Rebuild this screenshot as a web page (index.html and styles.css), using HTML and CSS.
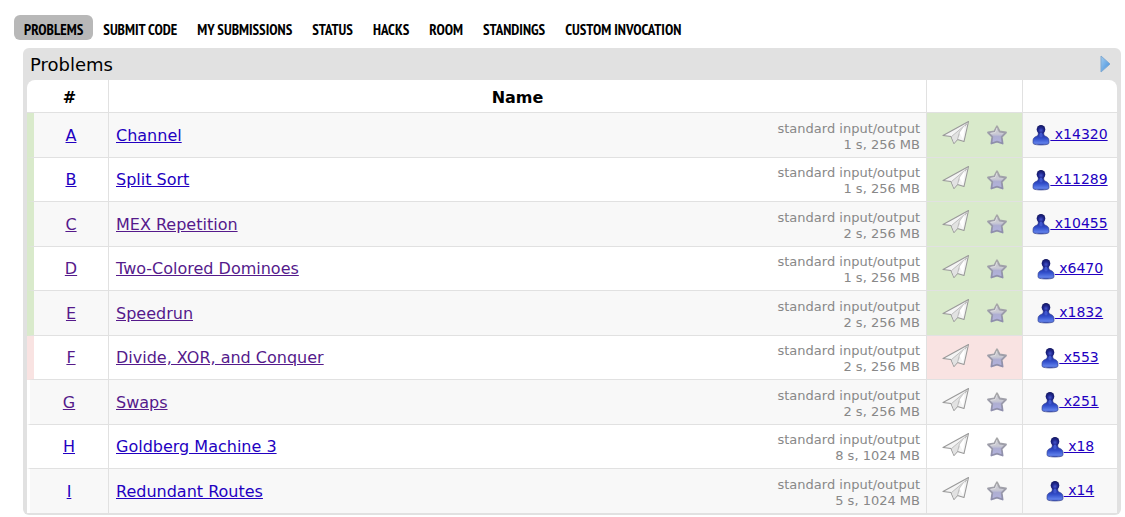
FILE: index.html
```html
<!DOCTYPE html>
<html lang="en">
<head>
<meta charset="utf-8">
<title>Problems</title>
<link rel="stylesheet" href="styles.css">
</head>
<body>
<svg class="defs" width="0" height="0" aria-hidden="true">
  <defs>
    <linearGradient id="star-fill" x1="0" y1="0" x2="0" y2="1"><stop offset="0" stop-color="#c8c8cc"/><stop offset=".45" stop-color="#cacad4"/><stop offset=".6" stop-color="#aeaed2"/><stop offset="1" stop-color="#b4b4e0"/></linearGradient>
    <linearGradient id="star-edge" x1="0" y1="0" x2="0" y2="1"><stop offset="0" stop-color="#a8a8a8"/><stop offset="1" stop-color="#8e8eac"/></linearGradient>
    <radialGradient id="head-fill" cx=".5" cy=".6" r=".6"><stop offset="0" stop-color="#4454cc"/><stop offset=".5" stop-color="#20288e"/><stop offset="1" stop-color="#12155e"/></radialGradient>
    <linearGradient id="body-fill" x1="0" y1="0" x2="0" y2="1"><stop offset="0" stop-color="#1c2590"/><stop offset=".5" stop-color="#3350cc"/><stop offset=".85" stop-color="#6080ea"/><stop offset="1" stop-color="#3c50b0"/></linearGradient>
    <linearGradient id="arrow-fill" x1="0" y1="0" x2="1" y2="1"><stop offset="0" stop-color="#a4cdf0"/><stop offset="1" stop-color="#3d8ddd"/></linearGradient>
    <symbol id="plane" viewBox="0 0 28 26">
      <path d="M26.500 1.500 1 15.500 9 16.500 12 23.500 15.500 19.500 22 21.500z" fill="#f4f4f4" stroke="#999" stroke-width="1.100" stroke-linejoin="round"/>
      <path d="M25.500 3 9.500 16.500 12 23 15.500 19z" fill="#e2e2e2"/>
      <path d="M25.500 3 9.500 16.500M25 4 17.500 12 15.500 19.500" fill="none" stroke="#b4b4b4" stroke-width=".8"/>
      <path d="M23 5 17.500 13 21 19z" fill="#fff"/>
    </symbol>
    <symbol id="star" viewBox="0 0 22 22">
      <path d="M11 2.200 13.700 7.500 20 8.500 15.700 12.800 16.600 19.500 11 17.600 5.400 19.500 6.300 12.800 2 8.500 8.300 7.500z" fill="url(#star-fill)" stroke="url(#star-edge)" stroke-width="1.800" stroke-linejoin="round"/>
      <path d="M11 4 9.300 8.500 4.500 9.300" fill="none" stroke="#dedee2" stroke-width="1"/>
    </symbol>
    <symbol id="user" viewBox="0 0 18 22">
      <path d="M6.300 8.500h5.400c0 2 .3 3 1.300 3.500 2.400 1 4 2 4 4.500v2.500c0 1.200-3 2-8 2s-8-.8-8-2v-2.500c0-2.500 1.600-3.500 4-4.500 1-.5 1.300-1.500 1.300-3.500z" fill="url(#body-fill)" stroke="#303c88" stroke-width=".6"/>
      <ellipse cx="9" cy="5.600" rx="4.300" ry="4.600" fill="url(#head-fill)"/>
      <ellipse cx="9" cy="11" rx="1.700" ry="2.500" fill="#4058d0"/>
    </symbol>
  </defs>
</svg>
<nav class="menu">
  <a class="menu-link current" href="#">PROBLEMS</a>
  <a class="menu-link" href="#">SUBMIT CODE</a>
  <a class="menu-link" href="#">MY SUBMISSIONS</a>
  <a class="menu-link" href="#">STATUS</a>
  <a class="menu-link" href="#">HACKS</a>
  <a class="menu-link" href="#">ROOM</a>
  <a class="menu-link" href="#">STANDINGS</a>
  <a class="menu-link" href="#">CUSTOM INVOCATION</a>
</nav>
<main class="panel">
  <div class="panel-head">
    <span>Problems</span>
    <svg class="arrow" viewBox="0 0 11 18"><path d="M1 1 10 9 1 17z" fill="url(#arrow-fill)" stroke="#7fa9d2" stroke-linejoin="round"/></svg>
  </div>
  <table class="problems">
    <thead><tr><th class="col-id">#</th><th>Name</th><th class="col-act"></th><th class="col-users"></th></tr></thead>
    <tbody>
      <tr class="accepted"><td class="id"><a href="#">A</a></td><td><div class="problem"><a href="#">Channel</a><div class="limits">standard input/output<br>1 s, 256 MB</div></div></td><td class="act"><div class="actions"><svg class="plane"><use href="#plane"/></svg><svg class="star"><use href="#star"/></svg></div></td><td class="users"><svg class="user"><use href="#user"/></svg><a href="#">&nbsp;x14320</a></td></tr>
      <tr class="accepted"><td class="id"><a href="#">B</a></td><td><div class="problem"><a href="#">Split Sort</a><div class="limits">standard input/output<br>1 s, 256 MB</div></div></td><td class="act"><div class="actions"><svg class="plane"><use href="#plane"/></svg><svg class="star"><use href="#star"/></svg></div></td><td class="users"><svg class="user"><use href="#user"/></svg><a href="#">&nbsp;x11289</a></td></tr>
      <tr class="accepted seen"><td class="id"><a href="#">C</a></td><td><div class="problem"><a href="#">MEX Repetition</a><div class="limits">standard input/output<br>2 s, 256 MB</div></div></td><td class="act"><div class="actions"><svg class="plane"><use href="#plane"/></svg><svg class="star"><use href="#star"/></svg></div></td><td class="users"><svg class="user"><use href="#user"/></svg><a href="#">&nbsp;x10455</a></td></tr>
      <tr class="accepted seen"><td class="id"><a href="#">D</a></td><td><div class="problem"><a href="#">Two-Colored Dominoes</a><div class="limits">standard input/output<br>1 s, 256 MB</div></div></td><td class="act"><div class="actions"><svg class="plane"><use href="#plane"/></svg><svg class="star"><use href="#star"/></svg></div></td><td class="users"><svg class="user"><use href="#user"/></svg><a href="#">&nbsp;x6470</a></td></tr>
      <tr class="accepted seen"><td class="id"><a href="#">E</a></td><td><div class="problem"><a href="#">Speedrun</a><div class="limits">standard input/output<br>2 s, 256 MB</div></div></td><td class="act"><div class="actions"><svg class="plane"><use href="#plane"/></svg><svg class="star"><use href="#star"/></svg></div></td><td class="users"><svg class="user"><use href="#user"/></svg><a href="#">&nbsp;x1832</a></td></tr>
      <tr class="rejected seen"><td class="id"><a href="#">F</a></td><td><div class="problem"><a href="#">Divide, XOR, and Conquer</a><div class="limits">standard input/output<br>2 s, 256 MB</div></div></td><td class="act"><div class="actions"><svg class="plane"><use href="#plane"/></svg><svg class="star"><use href="#star"/></svg></div></td><td class="users"><svg class="user"><use href="#user"/></svg><a href="#">&nbsp;x553</a></td></tr>
      <tr class="seen"><td class="id"><a href="#">G</a></td><td><div class="problem"><a href="#">Swaps</a><div class="limits">standard input/output<br>2 s, 256 MB</div></div></td><td class="act"><div class="actions"><svg class="plane"><use href="#plane"/></svg><svg class="star"><use href="#star"/></svg></div></td><td class="users"><svg class="user"><use href="#user"/></svg><a href="#">&nbsp;x251</a></td></tr>
      <tr><td class="id"><a href="#">H</a></td><td><div class="problem"><a href="#">Goldberg Machine 3</a><div class="limits">standard input/output<br>8 s, 1024 MB</div></div></td><td class="act"><div class="actions"><svg class="plane"><use href="#plane"/></svg><svg class="star"><use href="#star"/></svg></div></td><td class="users"><svg class="user"><use href="#user"/></svg><a href="#">&nbsp;x18</a></td></tr>
      <tr><td class="id"><a href="#">I</a></td><td><div class="problem"><a href="#">Redundant Routes</a><div class="limits">standard input/output<br>5 s, 1024 MB</div></div></td><td class="act"><div class="actions"><svg class="plane"><use href="#plane"/></svg><svg class="star"><use href="#star"/></svg></div></td><td class="users"><svg class="user"><use href="#user"/></svg><a href="#">&nbsp;x14</a></td></tr>
    </tbody>
  </table>
</main>
</body>
</html>
```
FILE: styles.css
```css
* { box-sizing: border-box; }
body { margin: 0; padding: 15px 4px 2px 14px; background: #fff; color: #000; font-family: Verdana, "DejaVu Sans", sans-serif; font-size: 16px; }
.defs { display: block; }
.menu { display: flex; font: bold 15px/25px "PT Sans Narrow", "Liberation Sans Narrow", "Open Sans Condensed", "Roboto Condensed", "Liberation Sans", sans-serif; }
.menu-link { padding: 2px 10px 0; height: 25px; border-radius: 6px; color: #000; text-decoration: none; white-space: nowrap; }
.menu-link.current { background: #b8b8b8; }
.panel { margin: 8px 0 0 9px; padding: 0 4px 2px; background: #e1e1e1; border-radius: 6px; }
.panel-head { display: flex; align-items: center; justify-content: space-between; height: 32px; padding: 0 6px 0 3px; font-size: 18px; }
.arrow { width: 11px; height: 18px; }
.problems { width: 100%; table-layout: fixed; border-collapse: separate; border-spacing: 0; background: #fff; border-radius: 8px 8px 0 0; }
.col-id { width: 82px; padding-left: 4px; }
.col-act { width: 96px; }
.col-users { width: 94px; }
th, td { padding: 0; border-right: 1px solid #e1e1e1; border-bottom: 1px solid #e1e1e1; }
th:last-child, td:last-child { border-right: 0; }
th { height: 33px; padding-top: 3px; }
td { height: 45px; }
tbody tr:nth-child(even) td, tbody tr:last-child td { height: 44px; }
tbody tr:last-child td { border-bottom: 0; }
tbody tr:nth-child(odd) td { background: #f8f8f8; }
.id { text-align: center; border-left: 3px solid #fff; }
.accepted .id { border-left: 7px solid #d9eacb; }
.rejected .id { border-left: 7px solid #f9e3e2; }
tbody tr.accepted .act { background: #d9eacb; }
tbody tr.rejected .act { background: #f9e3e2; }
a { color: #2200c1; }
.seen .id a, .seen .problem a { color: #551a8b; }
.problem { display: flex; align-items: center; justify-content: space-between; padding: 0 6px 0 7px; }
.limits { padding-top: 3px; font-size: 13px; line-height: 16px; text-align: right; color: #888; }
.actions { display: flex; align-items: center; justify-content: center; gap: 16px; }
.plane { width: 28px; height: 26px; margin-bottom: 4px; }
.star { width: 22px; height: 22px; }
.users { text-align: center; font-size: 14px; white-space: nowrap; }
.user { width: 18px; height: 22px; vertical-align: middle; }
```
